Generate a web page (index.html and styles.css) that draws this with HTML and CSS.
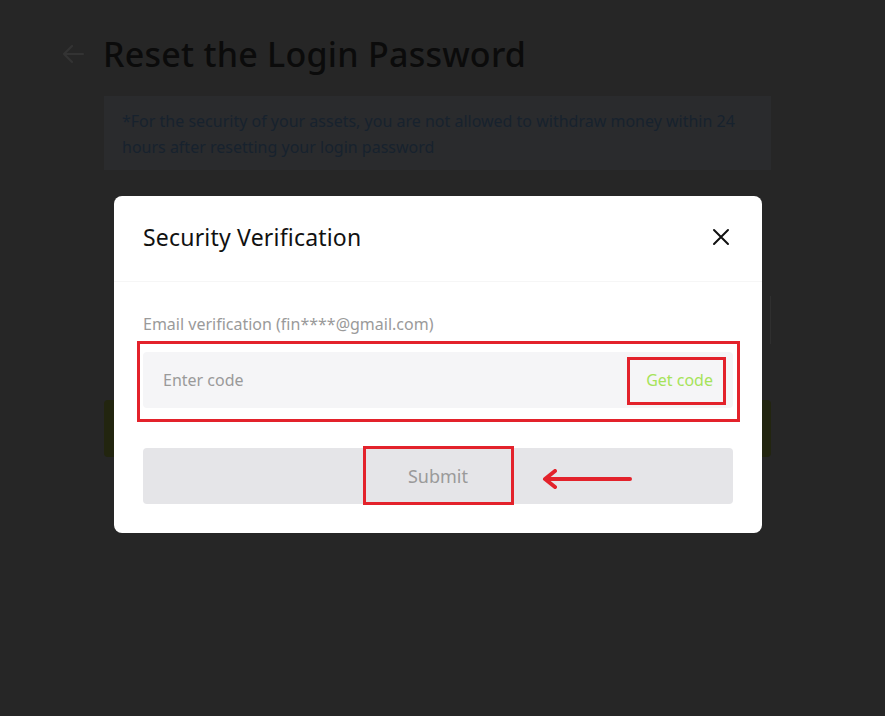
FILE: index.html
```html
<!DOCTYPE html>
<html>
<head>
<meta charset="utf-8">
<link rel="stylesheet" href="styles.css">
</head>
<body>
<div class="page">
  <div class="head">
    <svg class="back" width="24" height="20" viewBox="0 0 24 20"><path d="M22 10H3M11 2L3 10l8 8" fill="none" stroke="#333" stroke-width="2.2" stroke-linecap="round" stroke-linejoin="round"/></svg>
    <h1 class="title">Reset the Login Password</h1>
  </div>
  <div class="content">
    <div class="notice">*For the security of your assets, you are not allowed to withdraw money within 24 hours after resetting your login password</div>
    <div class="bg-input"></div>
    <div class="bg-btn"></div>
  </div>
</div>

<div class="modal">
  <div class="modal-head">
    <div class="modal-title">Security Verification</div>
    <svg class="close" width="18" height="18" viewBox="0 0 18 18"><path d="M2 2L16 16M16 2L2 16" stroke="#111" stroke-width="2" stroke-linecap="round"/></svg>
  </div>
  <div class="modal-body">
    <div class="label">Email verification (fin****@gmail.com)</div>
    <div class="field">
      <span class="ph">Enter code</span>
      <span class="getcode">Get code</span>
      <span class="mark mark-get"></span>
      <span class="mark mark-field"></span>
    </div>
    <div class="submit">
      <span>Submit</span>
      <span class="mark mark-submit"></span>
      <svg class="arrow" width="92" height="20" viewBox="0 0 92 20"><path d="M89 10H5M14 2L4 10l10 8" fill="none" stroke="#e3222b" stroke-width="4" stroke-linecap="round" stroke-linejoin="round"/></svg>
    </div>
  </div>
</div>
</body>
</html>
```

FILE: styles.css
```css
html, body {
  margin: 0;
  padding: 0;
}
body {
  background: #262626;
  width: 885px;
  height: 716px;
  overflow: hidden;
  font-family: "Noto Sans", "Liberation Sans", sans-serif;
  position: relative;
}
.page {
  padding: 33px 0 0 61px;
}
.head {
  display: flex;
  align-items: center;
  gap: 18px;
  height: 42px;
}
.back {
  display: block;
}
.title {
  margin: 0;
  font-size: 34px;
  font-weight: 500;
  color: #0b0b0b;
  letter-spacing: 0.25px;
}
.content {
  margin-left: 43px;
  width: 667px;
  margin-top: 21px;
}
.notice {
  background: #2a2b2d;
  color: #17222e;
  font-size: 16px;
  line-height: 26px;
  padding: 12px 18px 10px 18px;
}
.bg-input {
  margin-top: 126px;
  height: 48px;
  border-right: 1px solid #2f2f2f;
}
.bg-btn {
  margin-top: 56px;
  height: 57px;
  background: #22250f;
  border-radius: 4px;
}
.modal {
  position: absolute;
  left: 114px;
  top: 196px;
  width: 648px;
  height: 337px;
  background: #fff;
  border-radius: 8px;
}
.modal-head {
  height: 85px;
  border-bottom: 1px solid #f6f6f6;
  display: flex;
  align-items: center;
  justify-content: space-between;
  padding: 0 32px 0 29px;
}
.modal-title {
  font-size: 23px;
  letter-spacing: 0.2px;
  color: #111;
  margin-top: -4px;
}
.close {
  display: block;
  margin-top: -4px;
}
.modal-body {
  padding: 30px 29px 0 29px;
}
.label {
  font-size: 16px;
  line-height: 24px;
  color: #9a9a9a;
}
.field {
  position: relative;
  margin-top: 16px;
  height: 56px;
  background: #f5f5f7;
  border-radius: 4px;
  display: flex;
  align-items: center;
  justify-content: space-between;
  padding: 0 20px;
  font-size: 16px;
}
.ph {
  color: #9a9a9a;
}
.getcode {
  color: #a6e35a;
}
.mark {
  position: absolute;
  border: 3px solid #e3222b;
  pointer-events: none;
}
.mark-field {
  left: -6px;
  right: -7px;
  top: -11px;
  bottom: -14px;
}
.mark-get {
  right: 7px;
  width: 99px;
  top: 5px;
  bottom: 3px;
  box-sizing: border-box;
}
.submit {
  position: relative;
  margin-top: 40px;
  height: 56px;
  background: #e5e5e8;
  border-radius: 4px;
  display: flex;
  align-items: center;
  justify-content: center;
  font-size: 18px;
  color: #9a9a9a;
}
.mark-submit {
  left: 220px;
  width: 151px;
  top: -2px;
  height: 59px;
  box-sizing: border-box;
}
.arrow {
  position: absolute;
  left: 398px;
  top: 21px;
}
```
